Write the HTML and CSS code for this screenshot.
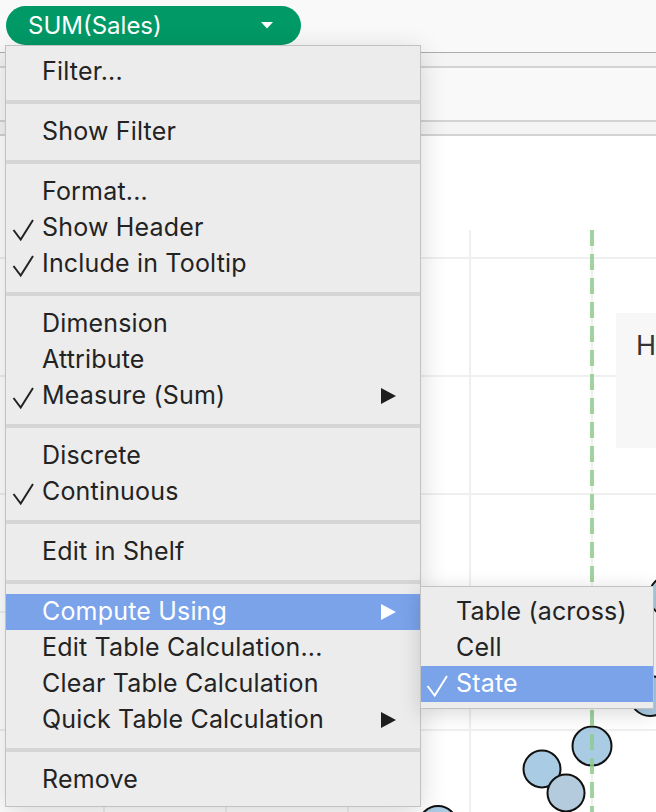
FILE: index.html
```html
<!DOCTYPE html>
<html>
<head>
<meta charset="utf-8">
<link rel="stylesheet" href="styles.css">
</head>
<body>
<div class="page">
  <div class="top">
    <div class="pill">
      <span class="pill-label">SUM(Sales)</span>
      <svg class="pill-caret" width="12" height="7" viewBox="0 0 12 7"><path d="M0 0 H12 L6 6.5 Z" fill="#ffffff"/></svg>
    </div>
  </div>
  <div class="band band-first"></div>
  <div class="mid"></div>
  <div class="band"></div>
  <svg class="chart" width="656" height="676" viewBox="0 0 656 676">
    <g stroke="#efefef" stroke-width="2">
      <line x1="104" y1="94" x2="104" y2="676"/>
      <line x1="226" y1="94" x2="226" y2="676"/>
      <line x1="348" y1="94" x2="348" y2="676"/>
      <line x1="470" y1="94" x2="470" y2="676"/>
      <line x1="592" y1="94" x2="592" y2="676"/>
      <line x1="0" y1="122" x2="656" y2="122"/>
      <line x1="0" y1="240" x2="656" y2="240"/>
      <line x1="0" y1="358" x2="656" y2="358"/>
      <line x1="0" y1="476" x2="656" y2="476"/>
      <line x1="0" y1="594" x2="656" y2="594"/>
    </g>
    <rect x="616" y="177" width="40" height="135" fill="#f7f7f7"/>
    <text x="636" y="219" class="chart-h">H</text>
    <g stroke="#111111" stroke-width="2">
      <circle cx="669" cy="460" r="20" fill="#a9cbe3"/>
      <circle cx="650" cy="560" r="20" fill="#a9cbe3"/>
      <circle cx="592" cy="610" r="19.5" fill="#a9cbe3"/>
      <circle cx="542" cy="633" r="18.5" fill="#a9cbe3"/>
      <circle cx="566" cy="657" r="18.5" fill="#b3cbdc"/>
      <circle cx="438" cy="689" r="19" fill="#a9cbe3"/>
    </g>
    <line x1="592" y1="94" x2="592" y2="676" stroke="#8fcd8f" stroke-opacity="0.85" stroke-width="4" stroke-dasharray="16 8"/>
  </svg>

  <div class="menu">
    <div class="section section-first">
      <div class="item"><span class="label">Filter...</span></div>
    </div>
    <div class="section">
      <div class="item"><span class="label">Show Filter</span></div>
    </div>
    <div class="section">
      <div class="item"><span class="label">Format...</span></div>
      <div class="item"><svg class="check" width="24" height="36" viewBox="0 0 24 36"><path d="M1.5 20 L8.7 29.5 L21 10" fill="none" stroke="#232323" stroke-width="2"/></svg><span class="label">Show Header</span></div>
      <div class="item"><svg class="check" width="24" height="36" viewBox="0 0 24 36"><path d="M1.5 20 L8.7 29.5 L21 10" fill="none" stroke="#232323" stroke-width="2"/></svg><span class="label">Include in Tooltip</span></div>
    </div>
    <div class="section">
      <div class="item"><span class="label">Dimension</span></div>
      <div class="item"><span class="label">Attribute</span></div>
      <div class="item"><svg class="check" width="24" height="36" viewBox="0 0 24 36"><path d="M1.5 20 L8.7 29.5 L21 10" fill="none" stroke="#232323" stroke-width="2"/></svg><span class="label">Measure (Sum)</span><svg class="arrow" width="15" height="16" viewBox="0 0 15 16"><path d="M0 0 L15 8 L0 16 Z" fill="#1e1e1e"/></svg></div>
    </div>
    <div class="section">
      <div class="item"><span class="label">Discrete</span></div>
      <div class="item"><svg class="check" width="24" height="36" viewBox="0 0 24 36"><path d="M1.5 20 L8.7 29.5 L21 10" fill="none" stroke="#232323" stroke-width="2"/></svg><span class="label">Continuous</span></div>
    </div>
    <div class="section">
      <div class="item"><span class="label">Edit in Shelf</span></div>
    </div>
    <div class="section">
      <div class="item item-active"><span class="label">Compute Using</span><svg class="arrow" width="15" height="16" viewBox="0 0 15 16"><path d="M0 0 L15 8 L0 16 Z" fill="#ffffff"/></svg></div>
      <div class="item"><span class="label">Edit Table Calculation...</span></div>
      <div class="item"><span class="label">Clear Table Calculation</span></div>
      <div class="item"><span class="label">Quick Table Calculation</span><svg class="arrow" width="15" height="16" viewBox="0 0 15 16"><path d="M0 0 L15 8 L0 16 Z" fill="#1e1e1e"/></svg></div>
    </div>
    <div class="section section-last">
      <div class="item"><span class="label">Remove</span></div>
    </div>
  </div>

  <div class="submenu">
    <div class="sub-item"><span class="label">Table (across)</span></div>
    <div class="sub-item"><span class="label">Cell</span></div>
    <div class="sub-item item-active"><svg class="sub-check" width="24" height="36" viewBox="0 0 24 36"><path d="M1.5 20 L8.7 29.5 L21 10" fill="none" stroke="#ffffff" stroke-width="2"/></svg><span class="label">State</span></div>
  </div>
</div>
</body>
</html>
```

FILE: styles.css
```css
* {
  box-sizing: border-box;
}

html, body {
  margin: 0;
  padding: 0;
}

body {
  width: 656px;
  height: 812px;
  overflow: hidden;
  background: #ffffff;
  font-family: Inter, "Liberation Sans", Arial, sans-serif;
}

.page {
  position: relative;
  width: 656px;
  height: 812px;
  overflow: hidden;
  display: flex;
  flex-direction: column;
}

.top {
  height: 52px;
  flex: none;
  background: #f9f9f9;
  padding: 6px 0 0 6px;
}

.pill {
  width: 295px;
  height: 39px;
  border-radius: 20px;
  background: #019966;
  display: flex;
  align-items: center;
  padding: 0 0 0 22px;
}

.pill-label {
  color: #ffffff;
  font-size: 24px;
  line-height: 38px;
  flex: 1;
}

.pill-caret {
  margin-right: 28px;
  margin-top: -1px;
}

.band {
  flex: none;
  height: 16px;
  background: #f4f4f4;
  border-top: 2px solid #d3d3d3;
  border-bottom: 2px solid #d3d3d3;
}

.band-first {
  height: 16px;
  border-top: 1px solid #acacac;
}

.mid {
  flex: none;
  height: 52px;
  background: #f9f9f9;
}

.chart {
  display: block;
  flex: none;
  background: #ffffff;
}

.chart-h {
  font-family: Inter, "Liberation Sans", Arial, sans-serif;
  font-size: 27px;
  fill: #333333;
}

.menu {
  position: absolute;
  left: 5px;
  top: 45px;
  width: 416px;
  height: 762px;
  background: #ececec;
  border: 1px solid #c2c2c2;
  box-shadow: 0 6px 26px rgba(0, 0, 0, 0.16);
  display: flex;
  flex-direction: column;
}

.section {
  padding: 10px 0;
  border-top: 4px solid #d5d5d5;
}

.section-first {
  border-top: none;
  padding-top: 8px;
}

.section-last {
  padding-bottom: 8px;
}

.item, .sub-item {
  height: 36px;
  display: flex;
  align-items: center;
  position: relative;
  color: #232323;
  font-size: 25px;
  line-height: 34px;
  letter-spacing: 0.18px;
  white-space: nowrap;
}

.item {
  padding: 0 24px 2px 36px;
}

.label {
  flex: 1;
}

.check {
  position: absolute;
  left: 6px;
  top: 0;
}

.arrow {
  flex: none;
  margin-bottom: -2px;
}

.item-active {
  background: #7aa3ea;
  color: #ffffff;
}

.submenu {
  position: absolute;
  left: 420px;
  top: 586px;
  width: 234px;
  height: 123px;
  background: #ececec;
  border: 1px solid #c2c2c2;
  box-shadow: 0 4px 20px rgba(0, 0, 0, 0.16);
  padding: 7px 0 0 0;
  display: flex;
  flex-direction: column;
}

.sub-item {
  padding: 0 8px 2px 35px;
}

.sub-check {
  position: absolute;
  left: 5px;
  top: 0;
}
```
